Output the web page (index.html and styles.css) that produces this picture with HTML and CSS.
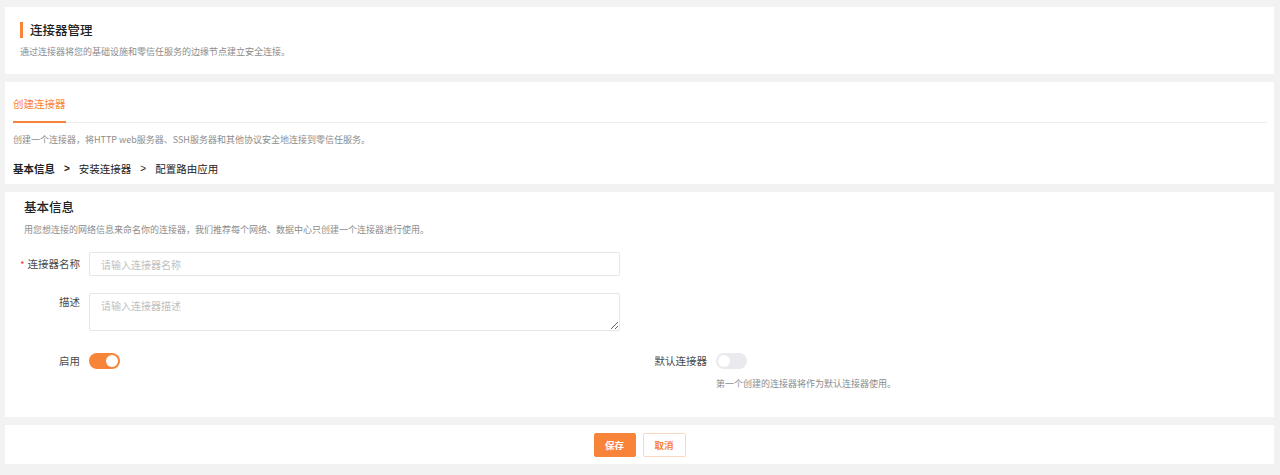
FILE: index.html
```html
<!DOCTYPE html>
<html lang="zh-CN">
<head>
  <meta charset="UTF-8" />
  <title>连接器管理</title>
  <link rel="stylesheet" href="styles.css">
</head>
<body>

  <!-- page header -->
  <div class="card head-card">
    <h1 class="page-title">连接器管理</h1>
    <p class="muted">通过连接器将您的基础设施和零信任服务的边缘节点建立安全连接。</p>
  </div>

  <!-- tabs + steps -->
  <div class="card tab-card">
    <div class="tabs">
      <span class="tab active">创建连接器</span>
    </div>
    <p class="muted tab-desc">创建一个连接器，将HTTP web服务器、SSH服务器和其他协议安全地连接到零信任服务。</p>
    <div class="steps">
      <span class="step current">基本信息</span>
      <span class="arrow strong">&gt;</span>
      <span class="step">安装连接器</span>
      <span class="arrow">&gt;</span>
      <span class="step">配置路由应用</span>
    </div>
  </div>

  <!-- form -->
  <div class="card form-card">
    <h2 class="section-title">基本信息</h2>
    <p class="muted section-desc">用您想连接的网络信息来命名你的连接器，我们推荐每个网络、数据中心只创建一个连接器进行使用。</p>

    <div class="form">
      <div class="row">
        <label class="label"><span class="req">*</span>连接器名称</label>
        <input class="input" type="text" placeholder="请输入连接器名称" />
      </div>

      <div class="row top">
        <label class="label">描述</label>
        <textarea class="input area" placeholder="请输入连接器描述"></textarea>
      </div>

      <div class="row switches">
        <div class="switch-item left">
          <label class="label">启用</label>
          <span class="switch on"></span>
        </div>
        <div class="switch-item">
          <label class="label">默认连接器</label>
          <div>
            <span class="switch"></span>
            <p class="muted hint">第一个创建的连接器将作为默认连接器使用。</p>
          </div>
        </div>
      </div>
    </div>
  </div>

  <!-- actions -->
  <div class="card actions">
    <button class="btn primary">保存</button>
    <button class="btn">取消</button>
  </div>

</body>
</html>
```

FILE: styles.css
```css
* {
  margin: 0;
  padding: 0;
  box-sizing: border-box;
}

body {
  background: #f2f2f2;
  font-family: "Noto Sans CJK SC", "Liberation Sans", sans-serif;
  color: #333;
  padding: 7px 6px 0 5px;
  display: flex;
  flex-direction: column;
  gap: 8px;
}

.card {
  background: #fff;
}

.muted {
  font-size: 9px;
  line-height: 14px;
  color: #8c8c8c;
}

/* header */
.head-card {
  padding: 15px 15px;
}

.page-title {
  font-size: 12.5px;
  font-weight: 500;
  line-height: 16px;
  color: #222;
  border-left: 3px solid #f8843a;
  padding-left: 7px;
}

.head-card .muted {
  margin-top: 7px;
}

/* tabs */
.tab-card {
  padding: 14px 7px 8px 8px;
}

.tabs {
  display: flex;
  border-bottom: 1px solid #ececec;
}

.tab {
  font-size: 10.5px;
  line-height: 16px;
  padding-bottom: 9px;
  margin-bottom: -1px;
}

.tab.active {
  color: #f8843a;
  border-bottom: 2px solid #f8843a;
}

.tab-desc {
  margin-top: 10px;
}

.steps {
  margin-top: 15px;
  font-size: 10.5px;
  line-height: 14px;
  display: flex;
  gap: 9px;
  color: #222;
}

.step.current {
  font-weight: 700;
}

.arrow {
  font-family: "Liberation Sans", sans-serif;
  font-size: 10px;
}

.arrow.strong {
  font-weight: 700;
}

/* form */
.form-card {
  padding: 7px 8px 26px 8px;
}

.section-title {
  font-size: 12.5px;
  font-weight: 500;
  line-height: 16px;
  color: #222;
  padding-left: 11px;
}

.section-desc {
  margin-top: 8px;
  padding-left: 11px;
}

.form {
  margin-top: 15px;
  display: flex;
  flex-direction: column;
  gap: 17px;
}

.row {
  display: flex;
  align-items: center;
}

.row.top {
  align-items: flex-start;
}

.row.top .label {
  padding-top: 1px;
}

.label {
  width: 76px;
  flex: none;
  text-align: right;
  white-space: nowrap;
  padding-right: 9px;
  font-size: 10.5px;
  line-height: 16px;
  color: #4a4a4a;
}

.req {
  color: #f5222d;
  margin-right: 3px;
  font-size: 9px;
}

.input {
  width: 531px;
  height: 24px;
  border: 1px solid #e6e6e6;
  border-radius: 2px;
  padding: 0 11px;
  font-family: inherit;
  font-size: 10px;
  color: #333;
  outline: none;
}

.input::placeholder {
  color: #bfbfbf;
}

.area {
  height: 38px;
  padding-top: 5px;
  line-height: 14px;
}

.switches {
  margin-top: 5px;
  align-items: flex-start;
}

.switch-item {
  display: flex;
  align-items: flex-start;
}

.switch-item.left {
  width: 627px;
}

.switch {
  display: block;
  position: relative;
  width: 31px;
  height: 16px;
  border-radius: 8px;
  background: #e9e9ee;
}

.switch::after {
  content: "";
  position: absolute;
  top: 2px;
  left: 2px;
  width: 12px;
  height: 12px;
  border-radius: 50%;
  background: #fff;
}

.switch.on {
  background: #f8843a;
}

.switch.on::after {
  left: 17px;
}

.hint {
  margin-top: 8px;
}

/* actions */
.actions {
  padding: 8px 0 7px;
  display: flex;
  justify-content: center;
  gap: 7px;
}

.btn {
  height: 24px;
  width: 43px;
  border: 1px solid #fbd8c3;
  border-radius: 2px;
  background: #fff;
  color: #f8843a;
  font-family: inherit;
  font-size: 9.5px;
  font-weight: 600;
}

.btn.primary {
  width: 42px;
  background: #f8843a;
  border-color: #f8843a;
  color: #fff;
}
```
